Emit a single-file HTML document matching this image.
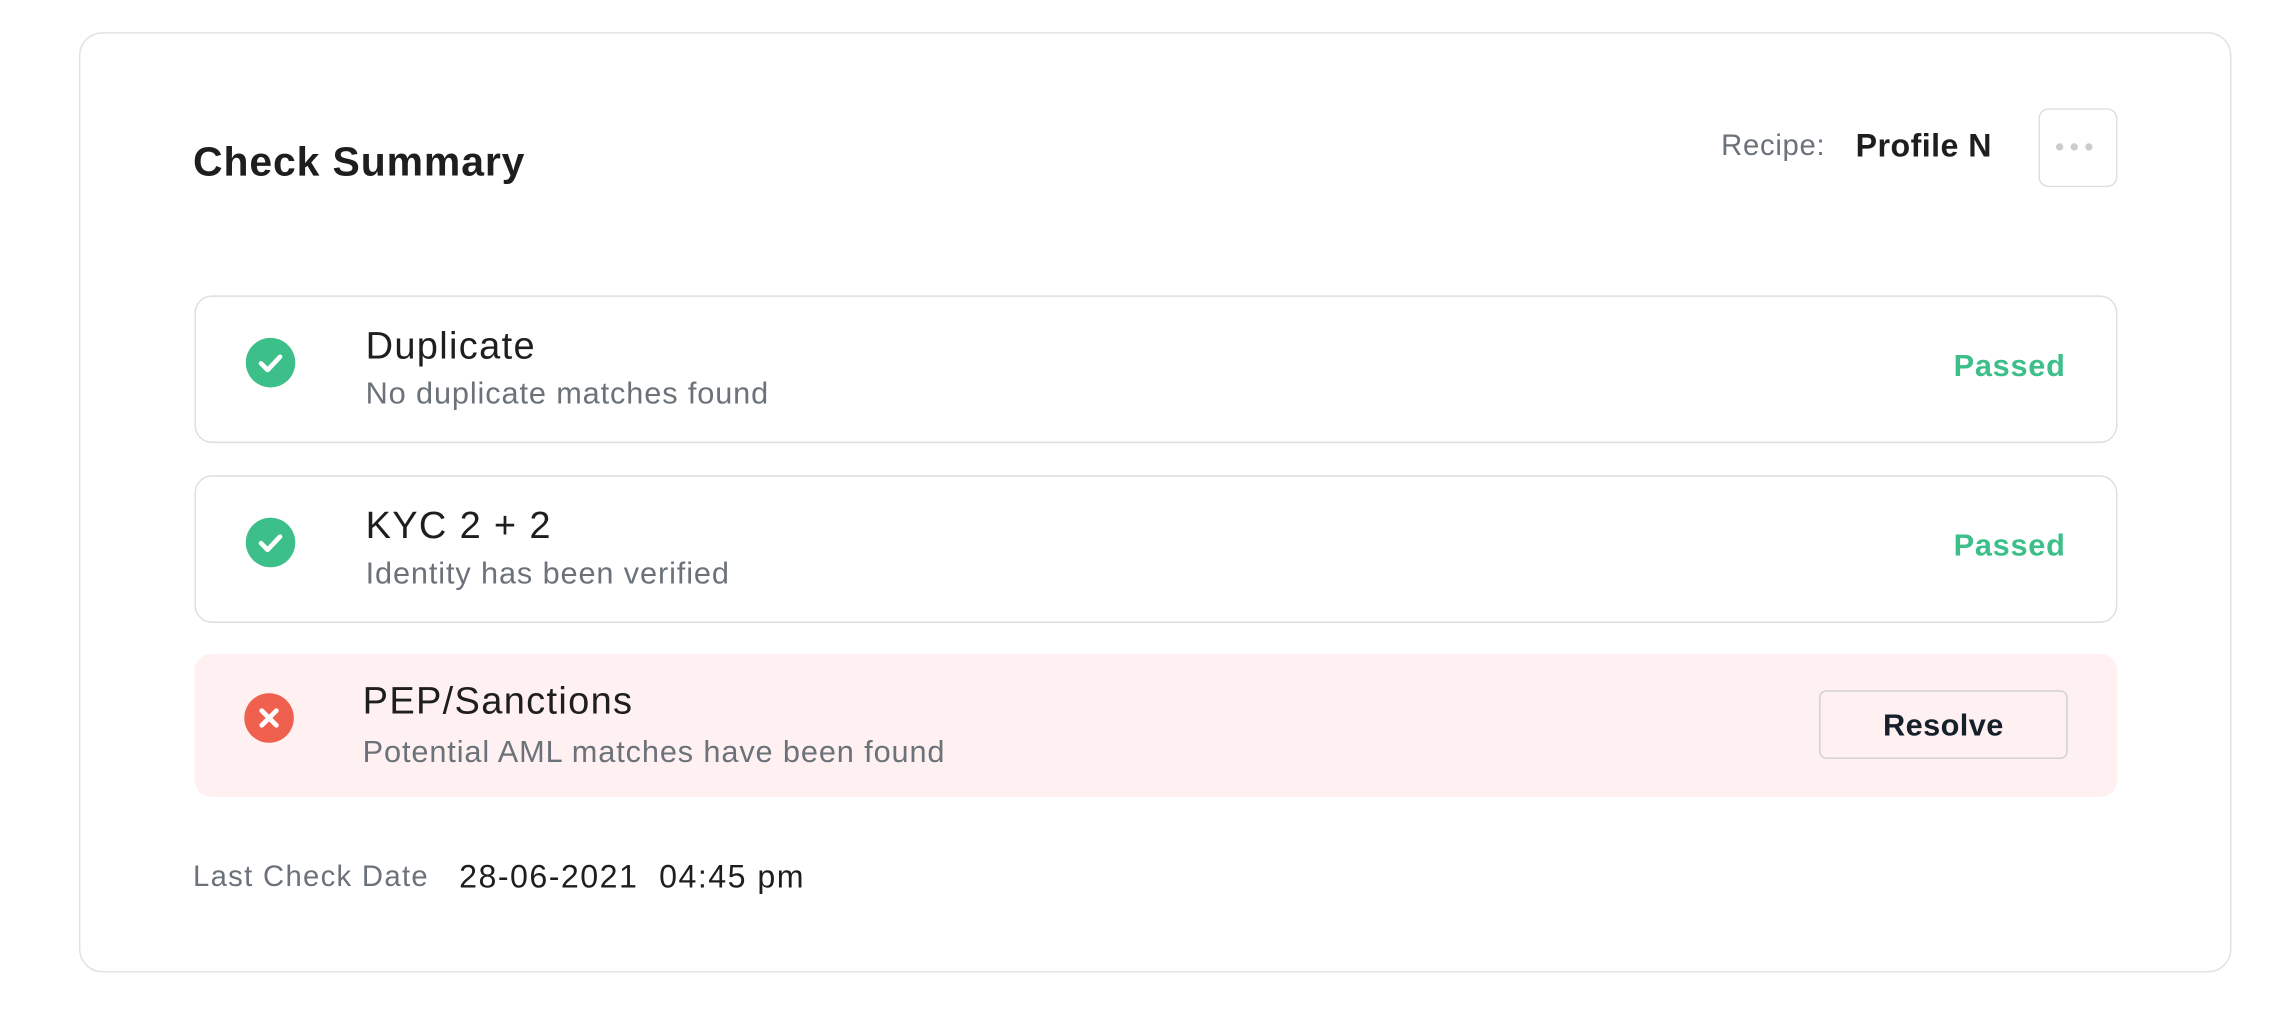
<!DOCTYPE html>
<html><head><meta charset="utf-8"><style>
html,body{margin:0;padding:0;background:#fff;width:2292px;height:1016px;overflow:hidden;font-family:"Liberation Sans",sans-serif;}
#w{position:absolute;left:0;top:0;width:1568px;height:695px;transform:scale(1.4623);transform-origin:0 0;}
.a{position:absolute;white-space:nowrap;}
.card{left:54px;top:22px;width:1472px;height:643px;border:1px solid #e2e2e2;border-radius:16px;box-sizing:border-box;}
.row{left:133px;width:1315px;height:101px;border:1px solid #dedede;border-radius:12px;box-sizing:border-box;}
.ic{width:34px;height:34px;border-radius:50%;}
.t{font-size:26px;color:#1e1e1e;line-height:1;letter-spacing:0.9px;}
.s{font-size:21px;color:#6b727a;line-height:1;letter-spacing:0.6px;}
.p{font-size:21px;font-weight:bold;color:#3dbf8a;line-height:1;letter-spacing:0.5px;}
</style></head><body><div id="w">
<div class="a card"></div>
<div class="a" style="left:132px;top:97px;font-size:28px;font-weight:bold;color:#1e1e1e;line-height:1;letter-spacing:0.6px">Check Summary</div>
<div class="a" style="left:1177px;top:90px;font-size:20px;color:#6b727a;line-height:1;letter-spacing:0.5px">Recipe:</div>
<div class="a" style="left:1269px;top:89px;font-size:22px;font-weight:bold;color:#1e1e1e;line-height:1;letter-spacing:0.3px">Profile N</div>
<div class="a" style="left:1394px;top:74px;width:54px;height:54px;border:1px solid #dedede;border-radius:7px;box-sizing:border-box"></div>
<div class="a" style="left:1406px;top:98px;width:5px;height:5px;border-radius:50%;background:#ccc;box-shadow:10px 0 #ccc,20px 0 #ccc"></div>

<div class="a row" style="top:202px"></div>
<svg class="a ic" style="left:168px;top:231px" viewBox="0 0 34 34"><circle cx="17" cy="17" r="17" fill="#3dbf8a"/><path d="M10.5 17.5l4.5 4.5 8.5-9" stroke="#fff" stroke-width="3.2" fill="none" stroke-linecap="round" stroke-linejoin="round"/></svg>
<div class="a t" style="left:250px;top:223px">Duplicate</div>
<div class="a s" style="left:250px;top:259px">No duplicate matches found</div>
<div class="a p" style="left:1336px;top:240px">Passed</div>

<div class="a row" style="top:325px"></div>
<svg class="a ic" style="left:168px;top:354px" viewBox="0 0 34 34"><circle cx="17" cy="17" r="17" fill="#3dbf8a"/><path d="M10.5 17.5l4.5 4.5 8.5-9" stroke="#fff" stroke-width="3.2" fill="none" stroke-linecap="round" stroke-linejoin="round"/></svg>
<div class="a t" style="left:250px;top:346px">KYC 2 + 2</div>
<div class="a s" style="left:250px;top:382px">Identity has been verified</div>
<div class="a p" style="left:1336px;top:363px">Passed</div>

<div class="a" style="left:133px;top:447px;width:1315px;height:98px;background:#fff1f1;border-radius:12px"></div>
<svg class="a ic" style="left:167px;top:474px" viewBox="0 0 34 34"><circle cx="17" cy="17" r="17" fill="#f0604f"/><path d="M12 12l10 10M22 12l-10 10" stroke="#fff" stroke-width="3.2" stroke-linecap="round"/></svg>
<div class="a t" style="left:248px;top:466px">PEP/Sanctions</div>
<div class="a s" style="left:248px;top:504px">Potential AML matches have been found</div>
<div class="a" style="left:1244px;top:472px;width:170px;height:47px;border:1px solid #cfcfcf;border-radius:5px;box-sizing:border-box;font-size:21px;font-weight:bold;color:#15202b;text-align:center;line-height:47px;letter-spacing:0.3px">Resolve</div>

<div class="a" style="left:132px;top:590px;font-size:20px;color:#6b727a;line-height:1;letter-spacing:0.9px">Last Check Date</div>
<div class="a" style="left:314px;top:589px;font-size:22px;color:#1e1e1e;line-height:1;letter-spacing:1px">28-06-2021&nbsp; 04:45 pm</div>
</div></body></html>
